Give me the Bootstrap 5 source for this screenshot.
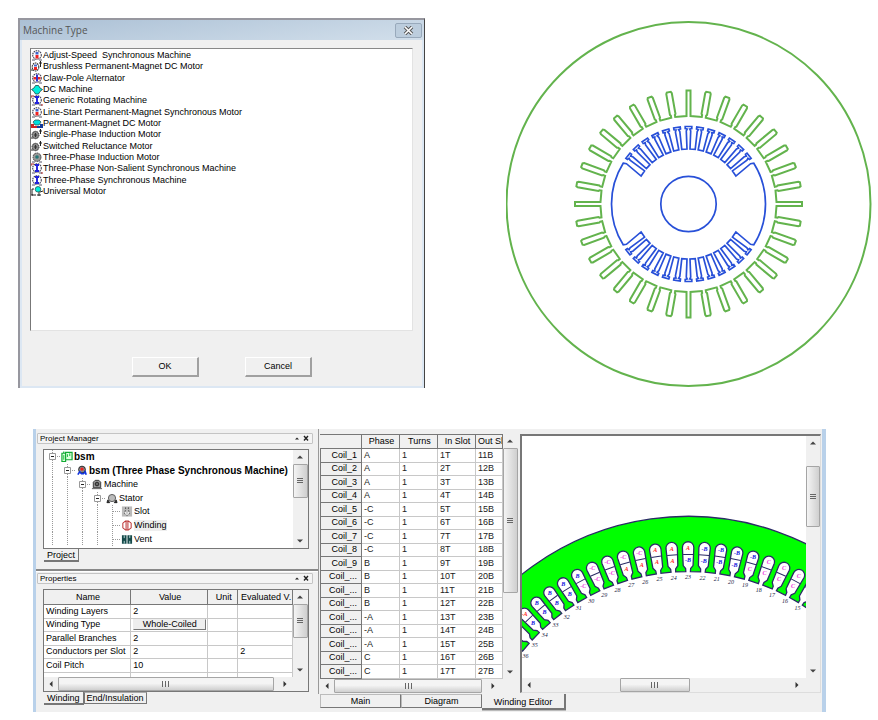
<!DOCTYPE html>
<html lang="en">
<head>
<meta charset="utf-8">
<meta name="viewport" content="width=device-width, initial-scale=1">
<title>Machine design</title>
<link rel="stylesheet" href="https://cdn.jsdelivr.net/npm/bootstrap@5.3.0/dist/css/bootstrap.min.css">
<style>
body{font:9px/11px "Liberation Sans",Arial,sans-serif;color:#000;background:#fff}
button{font:inherit;color:inherit;padding:0}
.top-area{display:grid;grid-template-columns:407fr 366fr;column-gap:81px;padding:18px 6px 0 18px}
.dialog{background:#f0f0f0;border:2px solid #97979f;border-right:1px solid #444;border-bottom:0;box-shadow:inset 2px -2px #dce7f3,inset -2px 0 #dce7f3;height:370px}
.dialog-title{height:20px;background:linear-gradient(172deg,#abc0d5,#d2dfeb);padding:0 2px 0 3px;font:10px/18px "Open Sans",sans-serif;color:#555}
.close-btn{width:27px;height:15px;border:1px solid #98a9bb;border-radius:2px;background:#bccddd;line-height:0}
.machine-list{margin:8px 11px 0 10px;height:283px;background:#fff;border:1px solid #e3e3e3;border-left:1px solid #777;border-top-color:#888;padding-top:1px}
.machine-list ul{height:147px}
.machine-list li{min-height:0}
.machine-list svg{width:12px;height:11px;flex:none}
.push{background:#f0f0f0;border:1px solid #fff;border-right:2px solid #a0a0a0;border-bottom:2px solid #a0a0a0;width:67px;height:20px}
.dialog-buttons{padding:26px 0 0;gap:46px}
.motor{margin-top:3px}
.editor{margin:41px 52px 0 33px;background:#f0f0f0;border-left:3px solid #b9d1ea;border-right:4px solid #b9d1ea;height:283px}
.side{flex:0 0 36%;border-right:1px solid #999;height:265px}
.pane-title{border:1px solid #c4c4c4;border-radius:1px;height:11px;font-size:8px;line-height:9px;padding:0 2px;margin:0 5px 0 1px;background:#f4f4f4}
.sunk{border:1px solid #777;background:#fff}
.tree{height:100px;margin:5px 9px 0 7px}
.tree-rows{height:96px}
.tree-row{padding-left:4px}
.tree-row.fw-bold{font-size:10px}
.tree-row .guide{width:15px;align-self:stretch;flex:none;background:repeating-linear-gradient(#999 0 1px,transparent 1px 2px) 4px 0/1px 100% no-repeat}
.tree-row .knot{width:13px;height:13px;flex:none}
.tree-row .pic{width:12px;height:11px;flex:none;margin-right:1px}
.chosen{background:#eee}
.tabline .tab{border:1px solid #777;border-top-color:#aaa;background:#f0f0f0;height:12px;line-height:9px;padding:0 2px}
.tabline .tab.on{border-top:0;border-left:0;border-bottom-width:2px;height:13px;line-height:12px;padding:0 3px}
.split{border-top:2px solid #888;border-bottom:1px solid #fff;margin:7px 0 1px}
.props{height:103px;margin:5px 9px 0 7px}
.clip{height:87px}
table{border-collapse:separate;border-spacing:0;width:100%;table-layout:fixed;line-height:11px}
td,th{padding:0 0 0 2px;overflow:hidden;white-space:nowrap;font-weight:400;border-right:1px solid #c8c8c8;border-bottom:1px solid #c8c8c8}
td{background:#fff}
thead th{background:#f0f0f0;border-right-color:#777;border-bottom-color:#777;text-align:center}
.prop-table{height:96px}
.prop-table thead th{height:15px}
.coil-table{height:245px}
.coil-table thead th{height:15px}
.prop-table .c1{width:35%}.prop-table .c2{width:31%}.prop-table .c3{width:12%}
.coil-table .c0{width:42px}.coil-table .c4{width:27px}
.coil-table tbody th{background:#f0f0f0;text-align:right;padding-right:4px;border-color:#777;border-left:1px solid #777}
.coil-table thead th{border-top:1px solid #777}
.coil-table td{color:#222}
.cell-btn{display:block;width:calc(100% - 1px);height:11px;line-height:9px;background:#eee;border:1px solid #eee;border-right-color:#777;border-bottom-color:#777}
.vbar{width:15px;flex:none;background:#f0f0f0}
.hbar{height:14px;flex:none;background:#f0f0f0}
.arrow{border:0;background:none;width:14px;height:14px;flex:none;line-height:0}
.thumb{border:1px solid #a5a5a5;border-radius:1px;background:linear-gradient(90deg,#f4f4f4,#cfcfcf)}
.hbar .thumb{background:linear-gradient(#f4f4f4 45%,#cfcfcf)}
.grip{width:6px;height:6px;background:repeating-linear-gradient(#666 0 1px,transparent 1px 2px)}
.hbar .grip{background:repeating-linear-gradient(90deg,#666 0 1px,transparent 1px 3px);width:7px}
.work{padding:5px 1px 0 1px}
.work-row{height:259px}
.coils{flex:0 0 198px}
.canvas-pane{border:2px solid #777;border-right:1px solid #ddd;border-bottom:1px solid #ddd;margin-left:2px}
.canvas-pane svg{display:block}
.canvas-pane .draw{background:#fff}
.canvas-pane .vbar{width:14px}
.h-p{height:34px}.h-c{height:145px}.h-d{height:61px}
.sheet-tabs{padding-top:1px}
.sheet-tabs .sheet{background:#f0f0f0;border:1px solid #777;border-top-color:#bbb;border-left-color:#bbb;height:14px;line-height:12px;width:81px}
.sheet-tabs .sheet.on{border:2px solid #777;border-top:0;border-left:0;height:16px;width:84px;line-height:16px;box-shadow:0 1px #bbb}
</style>
<script src="https://cdn.jsdelivr.net/npm/bootstrap@5.3.0/dist/js/bootstrap.bundle.min.js"></script>
</head>
<body>
<svg class="d-none" aria-hidden="true">
  <symbol id="i-ring" viewBox="0 0 12 11"><ellipse cx="6" cy="5" rx="4.3" ry="4.3" fill="#fff" stroke="#445" stroke-width="1.1" stroke-dasharray="1.6 .7"/><path d="M1 10h10" stroke="#556" stroke-dasharray="3 4"/></symbol>
  <symbol id="i-adj" viewBox="0 0 12 11"><use href="#i-ring"/><path d="M4.5 2h3v2.500h-3z" fill="#46c"/><path d="M4.500 5h3v3.500h-3z" fill="#e22"/></symbol>
  <symbol id="i-brush" viewBox="0 0 12 11"><ellipse cx="4.500" cy="6" rx="3.300" ry="4" fill="#fff" stroke="#333" stroke-width="1.1" stroke-dasharray="1.600 .7"/><path d="M3 3.500h3v2H3z" fill="#46c"/><path d="M3 6h3v3H3z" fill="#e22"/><path d="M8 2h3M9.500 0v6M0 9h2" stroke="#222"/></symbol>
  <symbol id="i-claw" viewBox="0 0 12 11"><use href="#i-ring"/><path d="M2.500 4h7v2.500h-7z" fill="#e22"/><path d="M5 1.500h2v7H5z" fill="#33c"/></symbol>
  <symbol id="i-dc" viewBox="0 0 12 11"><path d="M.5 5.500 3 4l1.500-2.500h3L9 4l2.500 1.500L9 7.500 7.500 10h-3L3 7.500z" fill="#0ed" stroke="#244" stroke-width=".8"/></symbol>
  <symbol id="i-gen" viewBox="0 0 12 11"><use href="#i-ring"/><path d="M4 2h4M6 2v6M4 8h4" stroke="#22d" stroke-width="1.900"/><path d="M0 1h3M10 10h2M0 3V1" stroke="#a22"/></symbol>
  <symbol id="i-sync" viewBox="0 0 12 11"><use href="#i-ring"/><path d="M4 2h4M6 2v6M4 8h4" stroke="#22d" stroke-width="1.900"/></symbol>
  <symbol id="i-pm" viewBox="0 0 12 11"><path d="M0 6h3v2h6V6h3v4H0z" fill="#123a9a"/><path d="M0 6h3v2h3v2H0z" fill="#c22"/><path d="m2 4 2-2h4l2 2-2 3H4z" fill="#0dd" stroke="#244" stroke-width=".7"/></symbol>
  <symbol id="i-ind1" viewBox="0 0 12 11"><ellipse cx="4.500" cy="6" rx="3.500" ry="3.700" fill="#888" stroke="#333" stroke-dasharray="1.500 .7"/><path d="M3 6h3M4.500 4v4" stroke="#333"/><path d="M8 2h3M9.500 0v5M0 9h2" stroke="#222"/></symbol>
  <symbol id="i-ind3" viewBox="0 0 12 11"><ellipse cx="6" cy="5.200" rx="4" ry="4.200" fill="#999" stroke="#444" stroke-dasharray="1.600 .7"/><circle cx="6" cy="5" r="1.800" fill="#277"/><path d="M1 10h10" stroke="#556" stroke-dasharray="3 4"/></symbol>
  <symbol id="i-uni" viewBox="0 0 12 11"><path d="M1 3v6h4M1 3h2M8 6v4M0 9h2M6 9h4M9 6l3-1" fill="none" stroke="#222"/><circle cx="7" cy="3.300" r="2.800" fill="#0ed" stroke="#244" stroke-width=".7"/></symbol>
  <symbol id="up" viewBox="0 0 14 14"><path d="m4 8.500 3-3 3 3z" fill="#444"/></symbol>
  <symbol id="down" viewBox="0 0 14 14"><path d="m4 5.500 3 3 3-3z" fill="#444"/></symbol>
  <symbol id="left" viewBox="0 0 14 14"><path d="m8.500 4-3 3 3 3z" fill="#333"/></symbol>
  <symbol id="right" viewBox="0 0 14 14"><path d="m5.500 4 3 3-3 3z" fill="#333"/></symbol>
  <symbol id="knot" viewBox="0 0 13 13"><path d="M4.500 0v13M9 6.500h4" stroke="#999" stroke-dasharray="1 1"/><path d="M1.500 3.500h6v6h-6z" fill="#fff" stroke="#999"/><path d="M3 6.500h3" stroke="#222"/></symbol>
  <symbol id="leaf" viewBox="0 0 13 13"><path d="M4.500 0v13M5 6.500h8" stroke="#999" stroke-dasharray="1 1"/></symbol>
  <symbol id="pinclose" viewBox="0 0 16 8"><path d="m1 5.500 2-2 2 2z" fill="#222"/><path d="m10 2 4 4.500m0-4.500-4 4.500" stroke="#222" stroke-width="1.400"/></symbol>
</svg>

<main>
<div class="top-area">
  <section class="dialog" aria-label="Machine Type">
    <div class="dialog-title d-flex justify-content-between align-items-center"><span>Machine Type</span>
      <button class="close-btn" aria-label="Close"><svg width="11" height="9" viewBox="0 0 11 9"><path d="m2 1 7 7m0-7-7 7" stroke="#555" stroke-width="3.500"/><path d="m2 1 7 7m0-7-7 7" stroke="#fff" stroke-width="1.600"/></svg></button>
    </div>
    <div class="machine-list">
      <ul id="machines" class="list-unstyled m-0 d-flex flex-column"></ul>
    </div>
    <div class="dialog-buttons d-flex justify-content-center">
      <button class="push">OK</button><button class="push">Cancel</button>
    </div>
  </section>
  <svg id="motor" class="motor w-100" viewBox="0 0 366 366" fill="none" stroke-width="2" role="img" aria-label="Motor cross-section"></svg>
</div>

<section class="editor d-flex">
  <div class="side">
    <div class="pt-1">
      <div class="pane-title d-flex justify-content-between"><span>Project Manager</span><svg width="16" height="8"><use href="#pinclose"/></svg></div>
      <div class="tree sunk d-flex">
        <div class="tree-rows flex-fill d-flex flex-column">
          <div class="tree-row flex-fill d-flex align-items-center fw-bold"><svg class="knot"><use href="#knot"/></svg><svg class="pic" viewBox="0 0 13 11"><path d="M1 2h4v9H1zM5 1h7v8H5zM3 0v2" fill="#dfd" stroke="#1a3" stroke-width="1.300"/><path d="M7 3v3M9.500 2v3M3 4v5" stroke="#1b3"/></svg>bsm</div>
          <div class="tree-row flex-fill d-flex align-items-center fw-bold"><span class="guide"></span><svg class="knot"><use href="#knot"/></svg><svg class="pic" viewBox="0 0 13 11"><circle cx="6.500" cy="4.500" r="3.700" fill="#888" stroke="#222"/><circle cx="6.500" cy="4" r="1.800" fill="#e22"/><path d="m2 10 2-3 2 2h2l2-2 1 3" fill="none" stroke="#13d" stroke-width="1.800"/></svg>bsm (Three Phase Synchronous Machine)</div>
          <div class="tree-row flex-fill d-flex align-items-center"><span class="guide"></span><span class="guide"></span><svg class="knot"><use href="#knot"/></svg><svg class="pic" viewBox="0 0 13 11"><path d="M2.500 9V3l2-2h4l2 2v6z" fill="#999" stroke="#333"/><circle cx="6.500" cy="5" r="2" fill="#666" stroke="#222"/><path d="M1 10h11" stroke="#555"/></svg>Machine</div>
          <div class="tree-row flex-fill d-flex align-items-center"><span class="guide"></span><span class="guide"></span><span class="guide"></span><svg class="knot"><use href="#knot"/></svg><svg class="pic" viewBox="0 0 13 11"><circle cx="6.500" cy="5" r="3.900" fill="#bbb" stroke="#555"/><path d="m2 7-1 3h3zm9 0 1 3H9z" fill="#222" stroke="#222"/></svg>Stator</div>
          <div class="tree-row flex-fill d-flex align-items-center"><span class="guide"></span><span class="guide"></span><span class="guide"></span><span class="guide"></span><svg class="knot"><use href="#leaf"/></svg><svg class="pic" viewBox="0 0 13 11"><path d="M1 0h11v11H1z" fill="#bbb"/><path d="M5 1v2L4 8l2 2M8 1v2l1 5-2 2" fill="#fff" stroke="#444" stroke-dasharray="2 1"/></svg>Slot</div>
          <div class="tree-row flex-fill d-flex align-items-center"><span class="guide"></span><span class="guide"></span><span class="guide"></span><span class="guide"></span><svg class="knot"><use href="#leaf"/></svg><svg class="pic" viewBox="0 0 13 11"><path d="M5 .500 2 3v5l3 2.500h3L11 8V3L8 .500zM5.500 1v9m2-9v9" fill="#fff" stroke="#b33" stroke-width="1.100"/></svg><span class="chosen">Winding</span></div>
          <div class="tree-row flex-fill d-flex align-items-center"><span class="guide"></span><span class="guide"></span><span class="guide"></span><span class="guide"></span><svg class="knot"><use href="#leaf"/></svg><svg class="pic" viewBox="0 0 13 11"><path d="M1 1h5v9H1zM7 1h5v9H7z" fill="#164a4a"/><path d="M3.500 1v3m0 3v3m6-9v3m0 3v3" stroke="#bdd"/></svg>Vent</div>
        </div>
        <div class="vbar d-flex flex-column"><button class="arrow" aria-label="Up"><svg width="14" height="14"><use href="#up"/></svg></button><div class="thumb h-p d-flex align-items-center justify-content-center"><i class="grip"></i></div><button class="arrow mt-auto" aria-label="Down"><svg width="14" height="14"><use href="#down"/></svg></button></div>
      </div>
      <div class="tabline d-flex ps-1 ms-1"><button class="tab on">Project</button></div>
    </div>
    <div class="split"></div>
    <div class="pane-title d-flex justify-content-between"><span>Properties</span><svg width="16" height="8"><use href="#pinclose"/></svg></div>
    <div class="props sunk d-flex flex-column">
      <div class="clip d-flex overflow-hidden">
        <div class="flex-fill">
        <table class="prop-table">
          <thead><tr><th class="c1">Name</th><th class="c2">Value</th><th class="c3">Unit</th><th>Evaluated V.</th></tr></thead>
          <tbody>
            <tr><td>Winding Layers</td><td>2</td><td></td><td></td></tr>
            <tr><td>Winding Type</td><td><button class="cell-btn">Whole-Coiled</button></td><td></td><td></td></tr>
            <tr><td>Parallel Branches</td><td>2</td><td></td><td></td></tr>
            <tr><td>Conductors per Slot</td><td>2</td><td></td><td>2</td></tr>
            <tr><td>Coil Pitch</td><td>10</td><td></td><td></td></tr>
            <tr><td>&nbsp;</td><td></td><td></td><td></td></tr>
          </tbody>
        </table>
        </div>
        <div class="vbar d-flex flex-column"><button class="arrow" aria-label="Up"><svg width="14" height="14"><use href="#up"/></svg></button><div class="thumb h-p d-flex align-items-center justify-content-center"><i class="grip"></i></div><button class="arrow mt-auto" aria-label="Down"><svg width="14" height="14"><use href="#down"/></svg></button></div>
      </div>
      <div class="hbar d-flex pe-3"><button class="arrow" aria-label="Left"><svg width="14" height="14"><use href="#left"/></svg></button><div class="thumb flex-fill d-flex align-items-center justify-content-center"><i class="grip"></i></div><button class="arrow ms-1" aria-label="Right"><svg width="14" height="14"><use href="#right"/></svg></button></div>
    </div>
    <div class="tabline d-flex ps-1 ms-1"><button class="tab on">Winding</button><button class="tab">End/Insulation</button></div>
  </div>

  <div class="work flex-fill d-flex flex-column">
    <div class="work-row d-flex">
      <div class="coils d-flex flex-column">
        <div class="d-flex">
          <div class="flex-fill">
          <table class="coil-table"><thead><tr><th class="c0"></th><th>Phase</th><th>Turns</th><th>In Slot</th><th class="c4">Out Sl</th></tr></thead><tbody id="coils"></tbody></table>
          </div>
          <div class="vbar d-flex flex-column"><button class="arrow" aria-label="Up"><svg width="14" height="14"><use href="#up"/></svg></button><div class="thumb h-c d-flex align-items-center justify-content-center"><i class="grip"></i></div><button class="arrow mt-auto" aria-label="Down"><svg width="14" height="14"><use href="#down"/></svg></button></div>
        </div>
        <div class="hbar d-flex"><button class="arrow" aria-label="Left"><svg width="14" height="14"><use href="#left"/></svg></button><div class="thumb w-75 d-flex align-items-center justify-content-center"><i class="grip"></i></div><button class="arrow ms-1" aria-label="Right"><svg width="14" height="14"><use href="#right"/></svg></button></div>
      </div>
      <div class="canvas-pane flex-fill d-flex flex-column">
        <div class="d-flex flex-fill">
          <div class="draw flex-fill"><svg id="stator" class="w-100 h-100" viewBox="521 436 286 241" preserveAspectRatio="xMidYMid slice" role="img" aria-label="Stator winding"></svg></div>
          <div class="vbar d-flex flex-column"><button class="arrow" aria-label="Up"><svg width="14" height="14"><use href="#up"/></svg></button><div class="thumb h-d mt-3 d-flex align-items-center justify-content-center"><i class="grip"></i></div><button class="arrow mt-auto" aria-label="Down"><svg width="14" height="14"><use href="#down"/></svg></button></div>
        </div>
        <div class="hbar d-flex justify-content-between pe-3"><button class="arrow" aria-label="Left"><svg width="14" height="14"><use href="#left"/></svg></button><div class="thumb w-25 me-3 d-flex align-items-center justify-content-center"><i class="grip"></i></div><button class="arrow" aria-label="Right"><svg width="14" height="14"><use href="#right"/></svg></button></div>
      </div>
    </div>
    <div class="sheet-tabs d-flex"><button class="sheet">Main</button><button class="sheet">Diagram</button><button class="sheet on">Winding Editor</button></div>
  </div>
</section>
</main>

<script>
const machines = [['adj','Adjust-Speed \u00a0Synchronous Machine'],['brush','Brushless Permanent-Magnet DC Motor'],['claw','Claw-Pole Alternator'],['dc','DC Machine'],['gen','Generic Rotating Machine'],['adj','Line-Start Permanent-Magnet Synchronous Motor'],['pm','Permanent-Magnet DC Motor'],['ind1','Single-Phase Induction Motor'],['ind1','Switched Reluctance Motor'],['ind3','Three-Phase Induction Motor'],['gen','Three-Phase Non-Salient Synchronous Machine'],['sync','Three-Phase Synchronous Machine'],['uni','Universal Motor']];
document.getElementById('machines').innerHTML = machines.map(([i, t]) =>
  `<li class="flex-fill d-flex align-items-center"><svg><use href="#i-${i}"/></svg>${t}</li>`).join('');

const phases = ['A','A','A','A','-C','-C','-C','-C','B','B','B','B','-A','-A','-A','C','C'];
document.getElementById('coils').innerHTML = phases.map((p, i) =>
  `<tr><th scope="row">Coil_${i < 9 ? i + 1 : '...'}</th><td>${p}</td><td>1</td><td>${i + 1}T</td><td>${i + 11}B</td></tr>`).join('');

// Point at radius r along a spoke (degrees clockwise from the top), shifted sideways by w.
const spoke = (cx, cy) => (deg, r, w = 0) => {
  const a = deg * Math.PI / 180;
  return (cx + r * Math.sin(a) + w * Math.cos(a)).toFixed(2) + ' ' + (cy - r * Math.cos(a) + w * Math.sin(a)).toFixed(2);
};

// Motor cross-section: 36 stator slots, salient rotor with 13 teeth on each pole.
{
  const P = spoke(182.5, 183);
  let st = '';
  for (let k = 0; k < 36; k++) {
    const d = k * 10, w = k % 9 ? 2.8 : 2;
    st += (k ? 'L' : 'M') + [P(d, 88, -2), P(d, 90, -2), P(d, 91, -w), P(d, 112, -w), P(d, 113.500, -2), P(d, 113.500, 2), P(d, 112, w), P(d, 91, w), P(d, 90, 2), P(d, 88, 2)].join('L');
  }
  let ro = '';
  const pitch = 60 / 7;
  for (const base of [0, 180]) {
    ro += (base ? 'L' : 'M') + P(base - 58, 77) + 'L' + P(base - 57, 74) + 'L' + P(base - 59.500, 55, 0);
    for (let k = -6; k <= 6; k++) {
      const d = base + k * pitch;
      ro += 'L' + [P(d, 55, -1.500), P(d, 73, -2.200), P(d, 75, -1.300), P(d, 75.500, -3.300), P(d, 77.500, -3.300), P(d, 77.500, 3.300), P(d, 75.500, 3.300), P(d, 75, 1.300), P(d, 73, 2.200), P(d, 55, 1.500)].join('L');
    }
    ro += 'L' + P(base + 59.500, 55) + 'L' + P(base + 57, 74) + 'L' + P(base + 58, 77) + 'A77 77 0 0 1 ' + P(base + 122, 77);
  }
  document.getElementById('motor').innerHTML =
    `<g stroke="#63b34d"><circle cx="182.500" cy="183" r="182"/><path d="${st}Z"/></g>` +
    `<g stroke="#2850d8" stroke-width="1.700"><path d="${ro}Z"/><circle cx="182.500" cy="183" r="27.700"/></g>`;
}

// Stator winding view: 90 slots at 4 degrees, slot 23 at the top.
{
  const P = spoke(688, 782);
  const red = '#f22', blue = '#11d', pink = '#e3d';
  const ink = {A: red, '-A': red, B: blue, '-B': blue, C: pink, '-C': pink};
  const fill = {16:['C','C'],17:['C','C'],18:['C','C'],19:['-B','C'],20:['-B','-B'],21:['-B','-B'],22:['-B','-B'],23:['A','-B'],24:['A','A'],25:['A','A'],26:['-C','A'],27:['-C','A'],28:['-C','-C'],29:['-C','-C'],30:['B','-C'],31:['B','B'],32:['B','B'],33:['B','B'],34:['-A','B']};
  let inner = '', mid = '', letters = '', numbers = '';
  for (let n = 37; n >= 13; n--) {
    const d = (23 - n) * 4;
    inner += 'L' + P(d, 211, -2.300) + 'L' + P(d, 214, -2.500) + 'L' + P(d, 217, -4.900) + 'L' + P(d, 235, -5.700) +
      'A5.700 5.700 0 0 1 ' + P(d, 235, 5.700) + 'L' + P(d, 217, 4.900) + 'L' + P(d, 214, 2.500) + 'L' + P(d, 211, 2.300);
    mid += 'M' + P(d, 228, -5) + 'L' + P(d, 228, 5);
    const label = (r, s, c) => { const [x, y] = P(d, r).split(' '); return `<text x="${x}" y="${+y + 2}" fill="${c}">${s}</text>`; };
    if (fill[n]) letters += label(234.500, fill[n][0], ink[fill[n][0]]) + label(222.500, fill[n][1], ink[fill[n][1]]);
    if (n > 14 && n < 37) numbers += label(205.500, n, '#224');
  }
  document.getElementById('stator').innerHTML =
    `<path d="M${P(-60, 266)}${inner}L${P(44, 266)}A266 266 0 0 0 ${P(-60, 266)}Z" fill="#0f0" stroke="#2b2b66" stroke-width="1.300"/>` +
    `<path d="${mid}" stroke="#2b2b66"/><g font-family="Liberation Serif,serif" font-style="italic" font-size="6" text-anchor="middle"><g font-weight="700">${letters}</g>${numbers}</g>`;
}
</script>
</body>
</html>
